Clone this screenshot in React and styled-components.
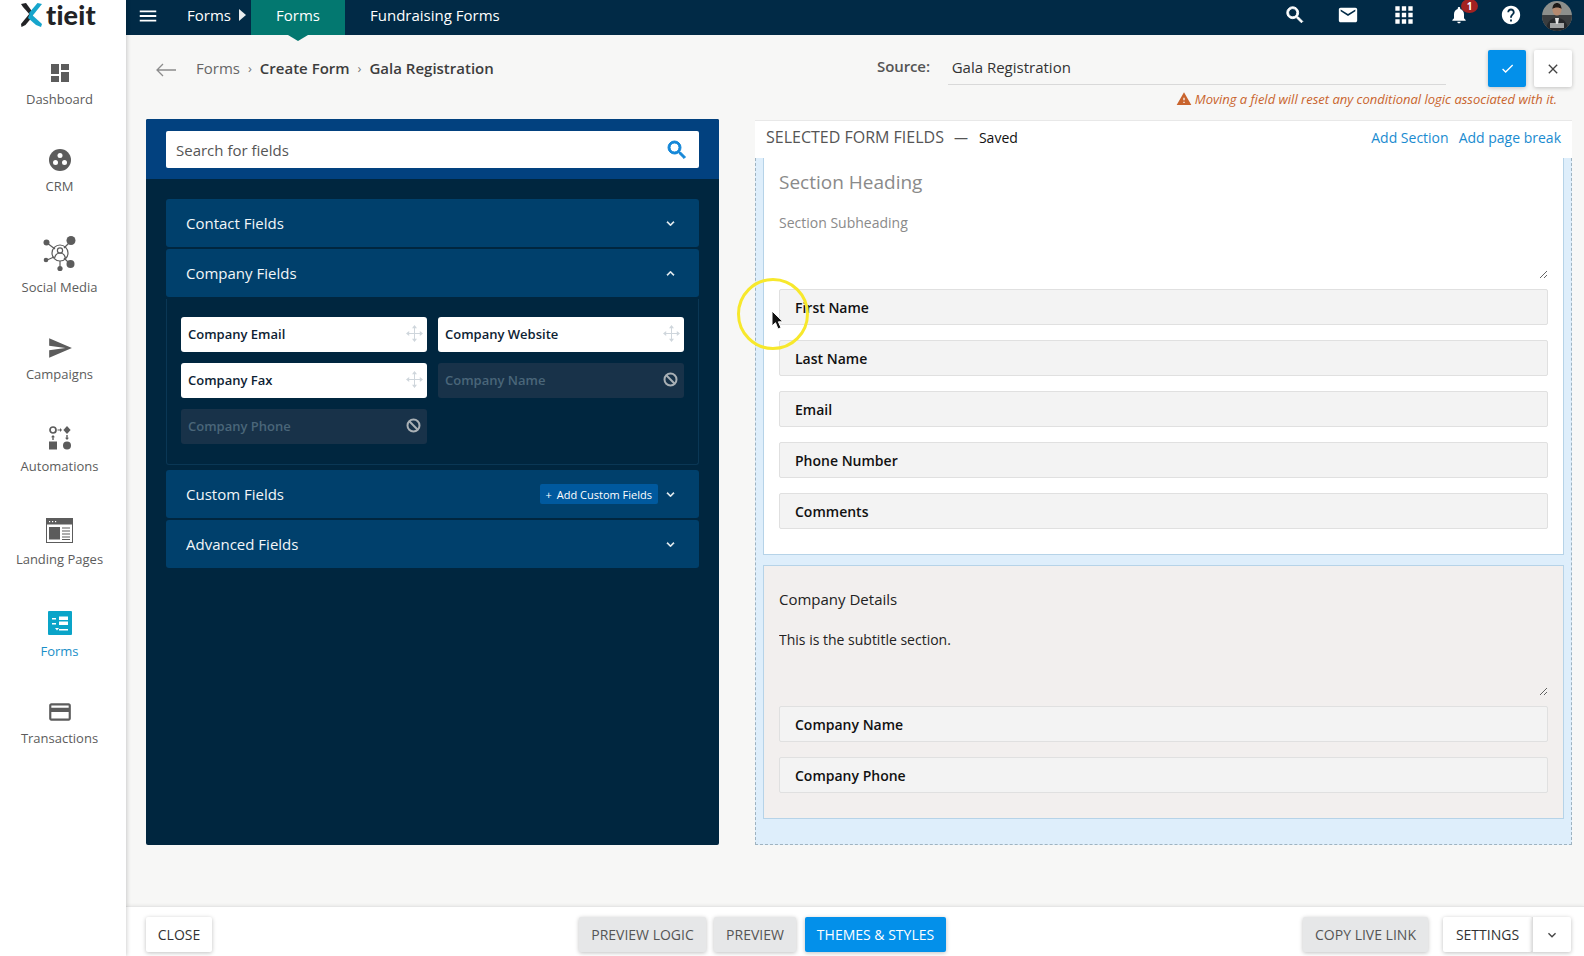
import React from "react";
import styled, { createGlobalStyle } from "styled-components";

const Global = createGlobalStyle`
  html, body { margin: 0; padding: 0; width: 1584px; height: 956px; overflow: hidden; background: #f7f7f6; }
  * { box-sizing: border-box; }
  body { font-family: "Open Sans", "Liberation Sans", sans-serif; }
`;

const P = {
  dashboard: "M3 13h8V3H3v10zm0 8h8v-6H3v6zm10 0h8V11h-8v10zm0-18v6h8V3h-8z",
  send: "M2.01 21L23 12 2.01 3 2 10l15 2-15 2z",
  card: "M20 4H4c-1.11 0-1.99.89-1.99 2L2 18c0 1.11.89 2 2 2h16c1.11 0 2-.89 2-2V6c0-1.11-.89-2-2-2zm0 14H4v-6h16v6zm0-10H4V6h16v2z",
  search: "M15.5 14h-.79l-.28-.27A6.471 6.471 0 0 0 16 9.5 6.5 6.5 0 1 0 9.5 16c1.61 0 3.09-.59 4.23-1.57l.27.28v.79l5 4.99L20.49 19l-4.99-5zm-6 0C7.01 14 5 11.99 5 9.5S7.01 5 9.5 5 14 7.01 14 9.5 11.99 14 9.5 14z",
  mail: "M20 4H4c-1.1 0-1.99.9-1.99 2L2 18c0 1.1.9 2 2 2h16c1.1 0 2-.9 2-2V6c0-1.1-.9-2-2-2zm0 4l-8 5-8-5V6l8 5 8-5v2z",
  apps: "M4 8h4V4H4v4zm6 12h4v-4h-4v4zm-6 0h4v-4H4v4zm0-6h4v-4H4v4zm6 0h4v-4h-4v4zm6-10v4h4V4h-4zm-6 4h4V4h-4v4zm6 6h4v-4h-4v4zm0 6h4v-4h-4v4z",
  bell: "M12 22c1.1 0 2-.9 2-2h-4c0 1.1.89 2 2 2zm6-6v-5c0-3.07-1.64-5.64-4.5-6.32V4c0-.83-.67-1.5-1.5-1.5s-1.5.67-1.5 1.5v.68C7.63 5.36 6 7.92 6 11v5l-2 2v1h16v-1l-2-2z",
  help: "M12 2C6.48 2 2 6.48 2 12s4.48 10 10 10 10-4.48 10-10S17.52 2 12 2zm1 17h-2v-2h2v2zm2.07-7.75l-.9.92C13.45 12.9 13 13.5 13 15h-2v-.5c0-1.1.45-2.1 1.17-2.83l1.24-1.26c.37-.36.59-.86.59-1.41 0-1.1-.9-2-2-2s-2 .9-2 2H8c0-2.21 1.79-4 4-4s4 1.79 4 4c0 .88-.36 1.68-.93 2.25z",
  warn: "M1 21h22L12 2 1 21zm12-3h-2v-2h2v2zm0-4h-2v-4h2v4z",
  menu: "M3 18h18v-2H3v2zm0-5h18v-2H3v2zm0-7v2h18V6H3z",
  check: "M9 16.17L4.83 12l-1.42 1.41L9 19 21 7l-1.41-1.41z",
  close: "M19 6.41L17.59 5 12 10.59 6.41 5 5 6.41 10.59 12 5 17.59 6.41 19 12 13.41 17.59 19 19 17.59 13.41 12z",
  down: "M7.41 8.59L12 13.17l4.59-4.58L18 10l-6 6-6-6z",
  up: "M7.41 15.41L12 10.83l4.59 4.58L18 14l-6-6-6 6z",
};

const Icon = ({ d, size = 24, color = "currentColor", bold = 0 }) => (
  <svg width={size} height={size} viewBox="0 0 24 24" fill={color} stroke={bold ? color : "none"} strokeWidth={bold} style={{ display: "block", flex: "none" }}>
    <path d={d} />
  </svg>
);

const Page = styled.div`
  position: relative;
  display: flex;
  width: 1584px;
  height: 956px;
  overflow: hidden;
`;

const Sidebar = styled.nav`
  flex: 0 0 126px;
  background: #fff;
  box-shadow: 1px 0 4px rgba(0, 0, 0, 0.18);
  z-index: 3;
  display: flex;
  flex-direction: column;
  align-items: center;
`;

const Logo = styled.div`
  display: flex;
  align-items: center;
  gap: 4px;
  height: 35px;
  width: 100%;
  padding: 0 0 6px 21px;
  margin-bottom: 26px;
`;

const LogoWord = styled.span`
  font-family: "Lato", sans-serif;
  font-weight: 900;
  font-size: 27px;
  line-height: 25px;
  letter-spacing: 0.2px;
  color: #222326;
`;

const SideList = styled.div`
  display: flex;
  flex-direction: column;
  gap: 39px;
  width: 100%;
  padding-right: 7px;
`;

const SideItem = styled.a`
  display: flex;
  flex-direction: column;
  align-items: center;
  gap: 5px;
  font-size: 13px;
  line-height: 19px;
  color: ${(p) => (p.$active ? "#1b8fc8" : "#5c5c5c")};
`;

const SideIcon = styled.div`
  height: ${(p) => p.$h}px;
  display: flex;
  align-items: center;
  justify-content: center;
`;

const Main = styled.div`
  flex: 1;
  min-width: 0;
  display: flex;
  flex-direction: column;
`;

const Topbar = styled.header`
  flex: 0 0 35px;
  background: #012a46;
  display: flex;
  align-items: stretch;
  color: #fff;
  font-size: 15px;
  z-index: 2;
`;

const Burger = styled.div`
  display: flex;
  align-items: center;
  margin-left: 11px;
  padding-bottom: 4px;
  color: #fff;
  width: 50px;
`;

const Crumb = styled.div`
  display: flex;
  align-items: center;
  padding-bottom: 5px;
  gap: 8px;
  width: 64px;
`;

const Triangle = styled.span`
  width: 0;
  height: 0;
  border-left: 7px solid #e8edf0;
  border-top: 6px solid transparent;
  border-bottom: 6px solid transparent;
`;

const ActiveTab = styled.div`
  position: relative;
  width: 94px;
  background: #037870;
  display: flex;
  align-items: center;
  justify-content: center;
  padding-bottom: 5px;
  &::after {
    content: "";
    position: absolute;
    left: 50%;
    top: 100%;
    margin-left: -10px;
    border-left: 10px solid transparent;
    border-right: 10px solid transparent;
    border-top: 6px solid #037870;
  }
`;

const TabLink = styled.div`
  display: flex;
  align-items: center;
  margin-left: 25px;
  padding-bottom: 5px;
`;

const TopActions = styled.div`
  margin-left: auto;
  display: flex;
  align-items: center;
  padding-right: 12px;
`;

const TopIcon = styled.div`
  position: relative;
  margin-right: ${(p) => p.$mr}px;
  padding-bottom: 5px;
`;

const Badge = styled.span`
  position: absolute;
  top: -6px;
  left: 12px;
  width: 17px;
  height: 14px;
  border-radius: 50%;
  background: #a32222;
  color: #fff;
  font-size: 10px;
  font-weight: 700;
  line-height: 14px;
  text-align: center;
`;

const Content = styled.div`
  flex: 1;
  min-height: 0;
  background: #f7f7f6;
  padding: 0 12px 0 20px;
  display: flex;
  flex-direction: column;
`;

const HeadRow = styled.div`
  display: flex;
  align-items: flex-start;
  height: 37px;
  margin-top: 15px;
`;

const Breadcrumb = styled.div`
  flex: 0 0 731px;
  display: flex;
  align-items: center;
  height: 36px;
  font-size: 15px;
  color: #666;
`;

const BackArrow = styled.div`
  margin: 3px 20px 0 10px;
  display: flex;
`;

const Sep = styled.span`
  margin: 0 8px;
  color: #777;
  font-size: 13px;
`;

const Strong = styled.span`
  font-weight: 600;
  color: #3d3d3d;
`;

const SourceLabel = styled.div`
  width: 71px;
  line-height: 32px;
  font-size: 15px;
  font-weight: 600;
  color: #555;
  letter-spacing: -0.1px;
`;

const SourceInput = styled.div`
  width: 501px;
  height: 35px;
  padding-left: 4px;
  border-bottom: 1px solid #d9d9d9;
  font-size: 15px;
  line-height: 34px;
  color: #333;
`;

const Square = styled.button`
  width: 38px;
  height: 37px;
  border: 0;
  border-radius: 2px;
  padding: 0;
  display: flex;
  align-items: center;
  justify-content: center;
  margin-left: ${(p) => p.$ml}px;
  background: ${(p) => (p.$primary ? "#0390ea" : "#fff")};
  color: ${(p) => (p.$primary ? "#fff" : "#444")};
  box-shadow: 0 1px 4px rgba(0, 0, 0, 0.22);
`;

const WarnRow = styled.div`
  display: flex;
  justify-content: flex-end;
  align-items: center;
  gap: 3px;
  height: 18px;
  margin-top: 3px;
  padding-right: 15px;
  font-size: 13px;
  font-style: italic;
  color: #c9642d;
`;

const Columns = styled.div`
  display: flex;
  gap: 36px;
  margin-top: 11px;
  height: 726px;
`;

const LeftPanel = styled.section`
  flex: 0 0 573px;
  background: #00263f;
  border-radius: 2px;
  display: flex;
  flex-direction: column;
`;

const SearchBand = styled.div`
  height: 60px;
  background: #02417f;
  padding: 12px 20px 0;
  border-radius: 2px 2px 0 0;
`;

const SearchBox = styled.div`
  height: 37px;
  background: #fff;
  border-radius: 2px;
  padding: 0 10px 0 10px;
  display: flex;
  align-items: center;
  justify-content: space-between;
  font-size: 15px;
  color: #555;
`;

const Accordion = styled.div`
  padding: 20px 20px 0;
  display: flex;
  flex-direction: column;
  gap: 2px;
`;

const AccRow = styled.div`
  height: 48px;
  background: #00406c;
  border-radius: 3px;
  padding: 0 21px 0 20px;
  display: flex;
  align-items: center;
  font-size: 15px;
  font-weight: 500;
  color: #f2f6f8;
`;

const AccTitle = styled.span`
  flex: 1;
`;

const AddCustom = styled.span`
  display: inline-flex;
  align-items: center;
  gap: 5px;
  height: 20px;
  padding: 0 6px;
  background: #00599e;
  border-radius: 2px;
  font-size: 11px;
  font-weight: 400;
  color: #fff;
  margin-right: 5px;
`;

const AccBody = styled.div`
  margin-bottom: 3px;
  padding: 18px 14px 20px;
  border: 1px solid #0a3755;
  border-top: 0;
  border-radius: 0 0 3px 3px;
  display: grid;
  grid-template-columns: 1fr 1fr;
  grid-auto-rows: 35px;
  gap: 11px 11px;
`;

const FieldChip = styled.div`
  display: flex;
  align-items: center;
  justify-content: space-between;
  padding: 0 4px 2px 7px;
  border-radius: 3px;
  font-size: 13px;
  font-weight: 600;
  background: ${(p) => (p.$off ? "#183249" : "#fff")};
  color: ${(p) => (p.$off ? "#4a6679" : "#0d2233")};
`;

const RightPanel = styled.section`
  flex: 1;
  min-width: 0;
  display: flex;
  flex-direction: column;
`;

const SelectedHead = styled.div`
  height: 38px;
  background: #fff;
  border-top: 1px solid #e8e8e8;
  margin-top: 1px;
  padding: 0 11px 5px;
  display: flex;
  align-items: center;
  font-size: 14px;
  color: #111;
`;

const SelectedTitle = styled.span`
  font-size: 16px;
  color: #555;
`;

const Dash = styled.span`
  margin: 0 11px 0 10px;
  color: #555;
`;

const HeadLinks = styled.div`
  margin-left: auto;
  display: flex;
  gap: 10px;
  font-size: 14px;
  color: #1a8bd0;
`;

const DropZone = styled.div`
  flex: 1;
  background: #deeefb;
  border: 1px dashed #9fb3c0;
  border-top: 0;
  padding: 0 7px;
  display: flex;
  flex-direction: column;
  gap: 10px;
`;

const FormSection = styled.div`
  background: ${(p) => (p.$tint ? "#f2efee" : "#fff")};
  border: 1px solid #b6d3e8;
  border-top: ${(p) => (p.$tint ? "1px solid #b6d3e8" : "0")};
  padding: ${(p) => (p.$tint ? "18px" : "9px")} 15px 25px;
  height: ${(p) => p.$height}px;
`;

const SectionTitle = styled.div`
  font-size: ${(p) => (p.$tint ? "15px" : "19px")};
  line-height: 30px;
  color: ${(p) => (p.$tint ? "#222" : "#8a8a8a")};
`;

const SectionSub = styled.textarea`
  display: block;
  width: 100%;
  height: 66px;
  margin: 16px 0 10px;
  padding: 0;
  border: 0;
  outline: 0;
  background: transparent;
  resize: vertical;
  font-family: inherit;
  font-size: 14px;
  line-height: 20px;
  color: ${(p) => (p.$tint ? "#222" : "#8a8a8a")};
`;

const FieldList = styled.div`
  display: flex;
  flex-direction: column;
  gap: 16px;
`;

const FormField = styled.div`
  height: 36px;
  margin-bottom: -1px;
  background: #f3f3f3;
  border: 1px solid #e0e0e0;
  border-radius: 2px;
  padding: 0 15px;
  display: flex;
  align-items: center;
  font-size: 14px;
  font-weight: 600;
  color: #111;
`;

const Footer = styled.footer`
  flex: 0 0 50px;
  background: #fff;
  border-top: 1px solid #e6e6e6;
  box-shadow: 0 -1px 3px rgba(0, 0, 0, 0.06);
  padding: 10px 13px 0 20px;
  display: flex;
  align-items: flex-start;
`;

const Btn = styled.button`
  height: 35px;
  width: ${(p) => p.$w}px;
  margin-left: ${(p) => p.$ml || 0}px;
  border: 0;
  border-radius: 2px;
  padding: 0;
  font-family: inherit;
  font-size: 14px;
  box-shadow: 0 1px 4px rgba(0, 0, 0, 0.25);
  background: ${(p) => (p.$kind === "primary" ? "#0390ea" : p.$kind === "grey" ? "#e6e7e8" : "#fff")};
  color: ${(p) => (p.$kind === "primary" ? "#fff" : p.$kind === "grey" ? "#555" : "#333")};
`;

const SplitChevron = styled.button`
  width: 39px;
  height: 35px;
  border: 0;
  border-left: 1px solid #ddd;
  border-radius: 0 2px 2px 0;
  padding: 0;
  background: #fff;
  color: #444;
  display: flex;
  align-items: center;
  justify-content: center;
  box-shadow: 0 1px 4px rgba(0, 0, 0, 0.25);
`;

const Highlight = styled.div`
  position: absolute;
  left: 737px;
  top: 278px;
  width: 72px;
  height: 72px;
  border: 3px solid #f7e82c;
  border-radius: 50%;
  z-index: 5;
`;

const Cursor = styled.svg`
  position: absolute;
  left: 771px;
  top: 311px;
  z-index: 6;
`;

const CrmIcon = () => (
  <svg width="24" height="24" viewBox="0 0 24 24">
    <circle cx="12" cy="12" r="11" fill="#5c5c5c" />
    <circle cx="12" cy="7.500" r="2.500" fill="#fff" />
    <circle cx="7.500" cy="14.500" r="2.500" fill="#fff" />
    <circle cx="16.500" cy="14.500" r="2.500" fill="#fff" />
  </svg>
);

const SocialIcon = () => (
  <svg width="36" height="36" viewBox="0 0 36 36" fill="none" stroke="#5c5c5c" strokeWidth="1.2">
    <path d="M5 7l8 6M28 6l-6 6M27 27l-5-5M5 24l7-3M18 25v6" />
    <circle cx="18" cy="17" r="8" />
    <circle cx="18" cy="14.5" r="2.6" />
    <path d="M12.5 22c1-4 3-5 5.500-5s4.500 1 5.500 5" />
    <g fill="#5c5c5c" stroke="none">
      <circle cx="4.500" cy="6.500" r="3" />
      <circle cx="29" cy="4.500" r="4.500" />
      <circle cx="28.500" cy="28" r="4" />
      <circle cx="4" cy="24" r="2.300" />
      <circle cx="18" cy="32.500" r="2.600" />
    </g>
  </svg>
);

const AutomationIcon = () => (
  <svg width="24" height="26" viewBox="0 0 24 26" fill="#5c5c5c">
    <circle cx="5" cy="5" r="3" fill="none" stroke="#5c5c5c" strokeWidth="1.700" />
    <path d="M19 1l3.600 4-3.600 4-3.600-4z" />
    <path d="M9.500 4.400h2.500V3l2 2-2 2V5.600H9.500z" />
    <path d="M5 10l2 2.300H5.700V15H4.300v-2.700H3z" />
    <path d="M19 15l-2-2.300h1.300V10h1.400v2.700H21z" />
    <rect x="1" y="16.500" width="8" height="8" />
    <circle cx="19" cy="20.500" r="4" />
  </svg>
);

const LandingIcon = () => (
  <svg width="27" height="25" viewBox="0 0 27 25">
    <rect x="0.500" y="0.500" width="26" height="24" fill="#fff" stroke="#5c5c5c" />
    <rect x="0" y="0" width="27" height="6.500" fill="#5c5c5c" />
    <g fill="#fff">
      <rect x="3" y="3" width="1.200" height="1.200" />
      <rect x="6" y="3" width="1.200" height="1.200" />
      <rect x="9" y="3" width="1.200" height="1.200" />
    </g>
    <rect x="3" y="9" width="11" height="12.500" fill="#5c5c5c" />
    <path d="M16 10h8M16 13h8M16 16h8M16 19h8M16 21.500h8" stroke="#5c5c5c" strokeWidth="1.200" />
  </svg>
);

const FormsIcon = () => (
  <svg width="24" height="24" viewBox="0 0 24 24">
    <rect width="24" height="24" rx="1" fill="#0aa4c8" />
    <g fill="#fff">
      <path d="M4 7h4v1.400H4zM11 5.500h9v3.500h-9zM4 12h4v1.400H4zM11 10.500h9v3.500h-9zM11 18h9v1.400h-9z" />
      <path d="M7 17h4l-2 2.500z" />
    </g>
  </svg>
);

const LogoMark = () => (
  <svg width="21" height="24" viewBox="0 0 21 24">
    <path d="M0 1l5-1 6.500 9L10 13 2 4z" fill="#222326" />
    <path d="M0 21l9-11 3 3-7.500 9-4 2z" fill="#222326" />
    <path d="M21 1l-4.500-1L8 10l3 3.500z" fill="#16a5cc" />
    <path d="M9 10l12 11-1 3-5-2-8-7z" fill="#16a5cc" />
  </svg>
);

const MoveIcon = () => (
  <svg width="17" height="17" viewBox="0 0 17 17" fill="#cfd6dc" stroke="none" style={{ display: "block", flex: "none" }}>
    <path d="M8.500 2.500v12M2.500 8.500h12" stroke="#cfd6dc" strokeWidth="1" fill="none" />
    <path d="M8.500 0l2.500 3.200H6zM8.500 17L6 13.800h5zM0 8.500l3.200-2.500v5zM17 8.500l-3.200 2.500V6z" />
  </svg>
);

const BlockIcon = () => (
  <svg width="15" height="15" viewBox="0 0 15 15" fill="none" stroke="#a9b0b5" strokeWidth="2" style={{ display: "block", flex: "none", marginRight: 2 }}>
    <circle cx="7.500" cy="7.500" r="6" />
    <path d="M3.300 3.300l8.400 8.400" />
  </svg>
);

const Avatar = () => (
  <svg width="30" height="30" viewBox="0 0 30 30" style={{ display: "block", marginBottom: 4 }}>
    <defs>
      <clipPath id="av"><circle cx="15" cy="15" r="15" /></clipPath>
    </defs>
    <g clipPath="url(#av)">
      <rect width="30" height="30" fill="#8c8f8c" />
      <rect x="0" y="14" width="30" height="16" fill="#3a3d3f" />
      <path d="M4 30c0-9 5-13 11-13s11 4 11 13z" fill="#26282b" />
      <path d="M13 17h4l-1 6h-2z" fill="#e2e2e2" />
      <ellipse cx="15" cy="9" rx="4.500" ry="5.500" fill="#b58a70" />
      <path d="M10.500 8c0-4 2-6 4.500-6s4.500 2 4.500 6c-2-2-7-2-9 0z" fill="#1e1a18" />
      <rect x="8" y="22" width="14" height="5" fill="#d8d8d8" opacity="0.700" />
    </g>
  </svg>
);

const sideItems = [
  { label: "Dashboard", h: 24, icon: <Icon d={P.dashboard} color="#5c5c5c" /> },
  { label: "CRM", h: 24, icon: <CrmIcon /> },
  { label: "Social Media", h: 38, icon: <SocialIcon /> },
  { label: "Campaigns", h: 24, icon: <Icon d={P.send} color="#5c5c5c" size={26} /> },
  { label: "Automations", h: 29, icon: <AutomationIcon /> },
  { label: "Landing Pages", h: 30, icon: <LandingIcon /> },
  { label: "Forms", h: 29, icon: <FormsIcon />, active: true },
  { label: "Transactions", h: 24, icon: <Icon d={P.card} color="#5c5c5c" size={26} /> },
];

const chips = [
  { label: "Company Email" },
  { label: "Company Website" },
  { label: "Company Fax" },
  { label: "Company Name", off: true },
  { label: "Company Phone", off: true },
];

const Chevron = ({ up }) => <Icon d={up ? P.up : P.down} size={15} color="#f2f6f8" bold={0.6} />;

export default function App() {
  return (
    <Page>
      <Global />
      <Sidebar>
        <Logo>
          <LogoMark />
          <LogoWord>tieit</LogoWord>
        </Logo>
        <SideList>
          {sideItems.map((s) => (
            <SideItem key={s.label} $active={s.active}>
              <SideIcon $h={s.h}>{s.icon}</SideIcon>
              {s.label}
            </SideItem>
          ))}
        </SideList>
      </Sidebar>
      <Main>
        <Topbar>
          <Burger><Icon d={P.menu} size={22} /></Burger>
          <Crumb>Forms<Triangle /></Crumb>
          <ActiveTab>Forms</ActiveTab>
          <TabLink>Fundraising Forms</TabLink>
          <TopActions>
            <TopIcon $mr={31}><Icon d={P.search} size={22} bold={1} /></TopIcon>
            <TopIcon $mr={32}><Icon d={P.mail} size={22} /></TopIcon>
            <TopIcon $mr={32}><Icon d={P.apps} size={26} /></TopIcon>
            <TopIcon $mr={31}><Icon d={P.bell} size={20} /><Badge>1</Badge></TopIcon>
            <TopIcon $mr={20}><Icon d={P.help} size={22} /></TopIcon>
            <Avatar />
          </TopActions>
        </Topbar>
        <Content>
          <HeadRow>
            <Breadcrumb>
              <BackArrow>
                <svg width="20" height="14" viewBox="0 0 20 14" fill="none" stroke="#8c8c8c" strokeWidth="1.300">
                  <path d="M20 7H1M7 1L1 7l6 6" />
                </svg>
              </BackArrow>
              Forms<Sep>›</Sep><Strong>Create Form</Strong><Sep>›</Sep><Strong>Gala Registration</Strong>
            </Breadcrumb>
            <SourceLabel>Source:</SourceLabel>
            <SourceInput>Gala Registration</SourceInput>
            <Square $primary $ml={42}><Icon d={P.check} size={15} /></Square>
            <Square $ml={8}><Icon d={P.close} size={16} /></Square>
          </HeadRow>
          <WarnRow>
            <Icon d={P.warn} size={16} color="#c9642d" />
            Moving a field will reset any conditional logic associated with it.
          </WarnRow>
          <Columns>
            <LeftPanel>
              <SearchBand>
                <SearchBox>
                  Search for fields
                  <Icon d={P.search} size={24} color="#1487d8" bold={1} />
                </SearchBox>
              </SearchBand>
              <Accordion>
                <AccRow><AccTitle>Contact Fields</AccTitle><Chevron /></AccRow>
                <AccRow><AccTitle>Company Fields</AccTitle><Chevron up /></AccRow>
                <AccBody>
                  {chips.map((c) => (
                    <FieldChip key={c.label} $off={c.off}>
                      {c.label}
                      {c.off ? <BlockIcon /> : <MoveIcon />}
                    </FieldChip>
                  ))}
                </AccBody>
                <AccRow>
                  <AccTitle>Custom Fields</AccTitle>
                  <AddCustom><span>+</span>Add Custom Fields</AddCustom>
                  <Chevron />
                </AccRow>
                <AccRow><AccTitle>Advanced Fields</AccTitle><Chevron /></AccRow>
              </Accordion>
            </LeftPanel>
            <RightPanel>
              <SelectedHead>
                <SelectedTitle>SELECTED FORM FIELDS</SelectedTitle>
                <Dash>—</Dash>
                Saved
                <HeadLinks><span>Add Section</span><span>Add page break</span></HeadLinks>
              </SelectedHead>
              <DropZone>
                <FormSection $height={397}>
                  <SectionTitle>Section Heading</SectionTitle>
                  <SectionSub readOnly defaultValue="Section Subheading" />
                  <FieldList>
                    {["First Name", "Last Name", "Email", "Phone Number", "Comments"].map((f) => (
                      <FormField key={f}>{f}</FormField>
                    ))}
                  </FieldList>
                </FormSection>
                <FormSection $tint $height={254}>
                  <SectionTitle $tint>Company Details</SectionTitle>
                  <SectionSub $tint readOnly defaultValue="This is the subtitle section." />
                  <FieldList>
                    {["Company Name", "Company Phone"].map((f) => (
                      <FormField key={f}>{f}</FormField>
                    ))}
                  </FieldList>
                </FormSection>
              </DropZone>
            </RightPanel>
          </Columns>
        </Content>
        <Footer>
          <Btn $w={66}>CLOSE</Btn>
          <Btn $kind="grey" $w={127} $ml={367}>PREVIEW LOGIC</Btn>
          <Btn $kind="grey" $w={82} $ml={8}>PREVIEW</Btn>
          <Btn $kind="primary" $w={141} $ml={9}>THEMES &amp; STYLES</Btn>
          <Btn $kind="grey" $w={125} $ml={357}>COPY LIVE LINK</Btn>
          <Btn $w={89} $ml={15}>SETTINGS</Btn>
          <SplitChevron><Icon d={P.down} size={16} /></SplitChevron>
        </Footer>
      </Main>
      <Highlight />
      <Cursor width="14" height="20" viewBox="0 0 14 20">
        <path d="M1 0v15l3.500-3.300L7 18l3-1.300-2.600-5.900H12z" fill="#111" stroke="#fff" strokeWidth="1" />
      </Cursor>
    </Page>
  );
}
